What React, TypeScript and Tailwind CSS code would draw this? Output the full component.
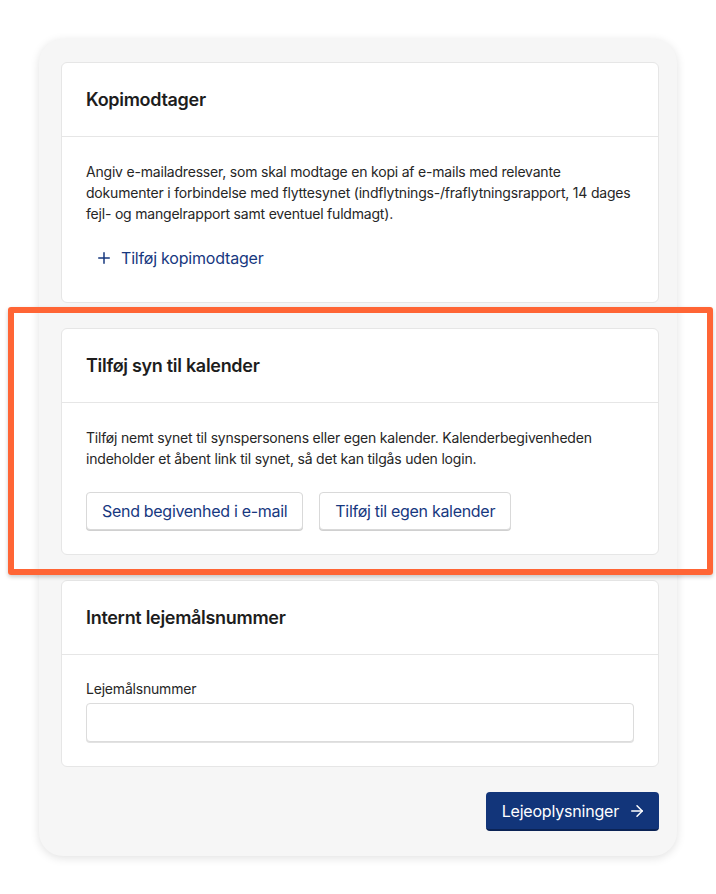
import React from "react";
import { ArrowRight } from "lucide-react";

function Card({ title, children }: { title: string; children: React.ReactNode }) {
  return (
    <div className="bg-white border border-[#e6e6e6] rounded-[6px]">
      <div className="px-6 pt-[23px] pb-[22px] border-b border-[#e6e6e6]">
        <h2 className="text-[18px] leading-7 font-semibold text-[#1d1d1d] tracking-[-0.3px]">{title}</h2>
      </div>
      <div className="px-6 pt-6 pb-6">{children}</div>
    </div>
  );
}

function OutlineButton({ children }: { children: React.ReactNode }) {
  return (
    <button className="h-[38px] px-[15px] bg-white border border-[#d9d9d9] rounded-[4px] shadow-[0_1px_0_#d0d0d0] text-[16px] tracking-[-0.3px] text-[#17387f]">
      {children}
    </button>
  );
}

export default function App() {
  return (
    <div className="min-h-[894px] bg-white pt-[39px] pl-[39px] relative" style={{ fontFamily: "Inter, 'Noto Sans', sans-serif" }}>
      <div className="w-[638px] rounded-[24px] bg-[#f6f6f6] pl-[22px] pr-[18px] pt-[23px] pb-[25px] shadow-[0_2px_10px_rgba(0,0,0,0.12)]">
        <div className="flex flex-col gap-[25px]">
          <Card title="Kopimodtager">
            <p className="text-[14px] leading-[21px] tracking-[-0.2px] text-[#262626]">
              Angiv e-mailadresser, som skal modtage en kopi af e-mails med relevante dokumenter i forbindelse med flyttesynet (indflytnings-/fraflytningsrapport, 14 dages fejl- og mangelrapport samt eventuel fuldmagt).
            </p>
            <button className="mt-[14px] h-10 px-3 flex items-center gap-[11px] text-[16px] tracking-[-0.2px] text-[#17387f]">
              <svg width="12" height="12" viewBox="0 0 12 12" fill="none" stroke="currentColor" strokeWidth="1.5" strokeLinecap="round">
                <path d="M6 0.75V11.25M0.75 6H11.25" />
              </svg>
              <span>Tilføj kopimodtager</span>
            </button>
          </Card>
          <Card title="Tilføj syn til kalender">
            <p className="text-[14px] leading-[21px] tracking-[-0.2px] text-[#262626]">
              Tilføj nemt synet til synspersonens eller egen kalender. Kalenderbegivenheden indeholder et åbent link til synet, så det kan tilgås uden login.
            </p>
            <div className="mt-[23px] flex gap-4">
              <OutlineButton>Send begivenhed i e-mail</OutlineButton>
              <OutlineButton>Tilføj til egen kalender</OutlineButton>
            </div>
          </Card>
          <Card title="Internt lejemålsnummer">
            <label className="block text-[14px] leading-5 tracking-[-0.2px] text-[#262626] mb-1">Lejemålsnummer</label>
            <input className="block w-full h-[39px] bg-white border border-[#dcdcdc] rounded-[4px] shadow-[0_1px_0_#e2e2e2] outline-none px-3" />
          </Card>
          <div className="flex justify-end">
            <button className="h-[39px] pl-4 pr-[13px] flex items-center gap-[9px] bg-[#12357a] border-b-2 border-[#0b2355] rounded-[4px] text-white text-[16px] tracking-[-0.2px]">
              <span>Lejeoplysninger</span>
              <ArrowRight size={18} strokeWidth={2} />
            </button>
          </div>
        </div>
      </div>
      <div className="absolute left-[8px] top-[307px] w-[705px] h-[268px] border-[6px] border-[#ff6535] rounded-[3px] shadow-[0_2px_4px_rgba(0,0,0,0.2)] pointer-events-none" />
    </div>
  );
}
